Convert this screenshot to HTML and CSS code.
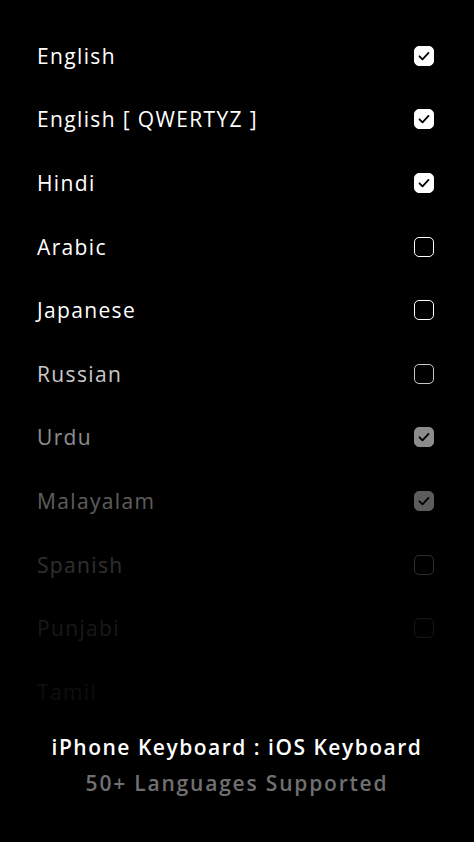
FILE: index.html
```html
<!DOCTYPE html>
<html>
<head>
<meta charset="utf-8">
<link rel="stylesheet" href="styles.css">
</head>
<body>
<div class="screen">
  <ul class="list">
    <li class="row"><span class="name">English</span><span class="box on"><svg viewBox="0 0 22 22"><path d="M6.5 11.3l3 3 6-6.4"/></svg></span></li>
    <li class="row"><span class="name">English [ QWERTYZ ]</span><span class="box on"><svg viewBox="0 0 22 22"><path d="M6.5 11.3l3 3 6-6.4"/></svg></span></li>
    <li class="row"><span class="name">Hindi</span><span class="box on"><svg viewBox="0 0 22 22"><path d="M6.5 11.3l3 3 6-6.4"/></svg></span></li>
    <li class="row"><span class="name">Arabic</span><span class="box"></span></li>
    <li class="row"><span class="name">Japanese</span><span class="box"></span></li>
    <li class="row f1"><span class="name">Russian</span><span class="box"></span></li>
    <li class="row f2"><span class="name">Urdu</span><span class="box on"><svg viewBox="0 0 22 22"><path d="M6.5 11.3l3 3 6-6.4"/></svg></span></li>
    <li class="row f3"><span class="name">Malayalam</span><span class="box on"><svg viewBox="0 0 22 22"><path d="M6.5 11.3l3 3 6-6.4"/></svg></span></li>
    <li class="row f4"><span class="name">Spanish</span><span class="box"></span></li>
    <li class="row f5"><span class="name">Punjabi</span><span class="box"></span></li>
    <li class="row f6"><span class="name">Tamil</span><span class="box hidden"></span></li>
  </ul>
  <div class="footer">
    <div class="title">iPhone Keyboard : iOS Keyboard</div>
    <div class="subtitle">50+ Languages Supported</div>
  </div>
</div>
</body>
</html>
```
FILE: styles.css
```css
html, body {
  margin: 0;
  padding: 0;
  background: #000;
}
.screen {
  height: 842px;
  display: flex;
  flex-direction: column;
  overflow: hidden;
}
.list {
  list-style: none;
  margin: 0;
  padding: 24px 40px 0 37px;
}
.row {
  height: 63.6px;
  display: flex;
  align-items: center;
  justify-content: space-between;
}
.name {
  font-family: "Open Sans", sans-serif;
  font-size: 21px;
  font-weight: 500;
  letter-spacing: 1.35px;
  color: #fff;
}
.box {
  width: 18px;
  height: 18px;
  border: 1.7px solid #fff;
  border-radius: 5px;
  display: flex;
  align-items: center;
  justify-content: center;
}
.box.on {
  background: #fff;
}
.box svg {
  width: 22px;
  height: 22px;
  flex: none;
}
.box svg path {
  fill: none;
  stroke: #000;
  stroke-width: 1.8;
  stroke-linecap: round;
  stroke-linejoin: round;
}
.box.hidden {
  visibility: hidden;
}
.f1 { opacity: 0.78; }
.f2 { opacity: 0.55; }
.f3 { opacity: 0.36; }
.f4 { opacity: 0.18; }
.f5 { opacity: 0.09; }
.f6 { opacity: 0.05; }
.footer {
  margin-top: auto;
  padding-bottom: 41px;
  text-align: center;
  font-family: "Open Sans", sans-serif;
  font-weight: 600;
  font-size: 21px;
  letter-spacing: 1.5px;
}
.title {
  color: #fff;
  line-height: 36px;
}
.subtitle {
  color: #707070;
  line-height: 36px;
  letter-spacing: 1.8px;
}
```
